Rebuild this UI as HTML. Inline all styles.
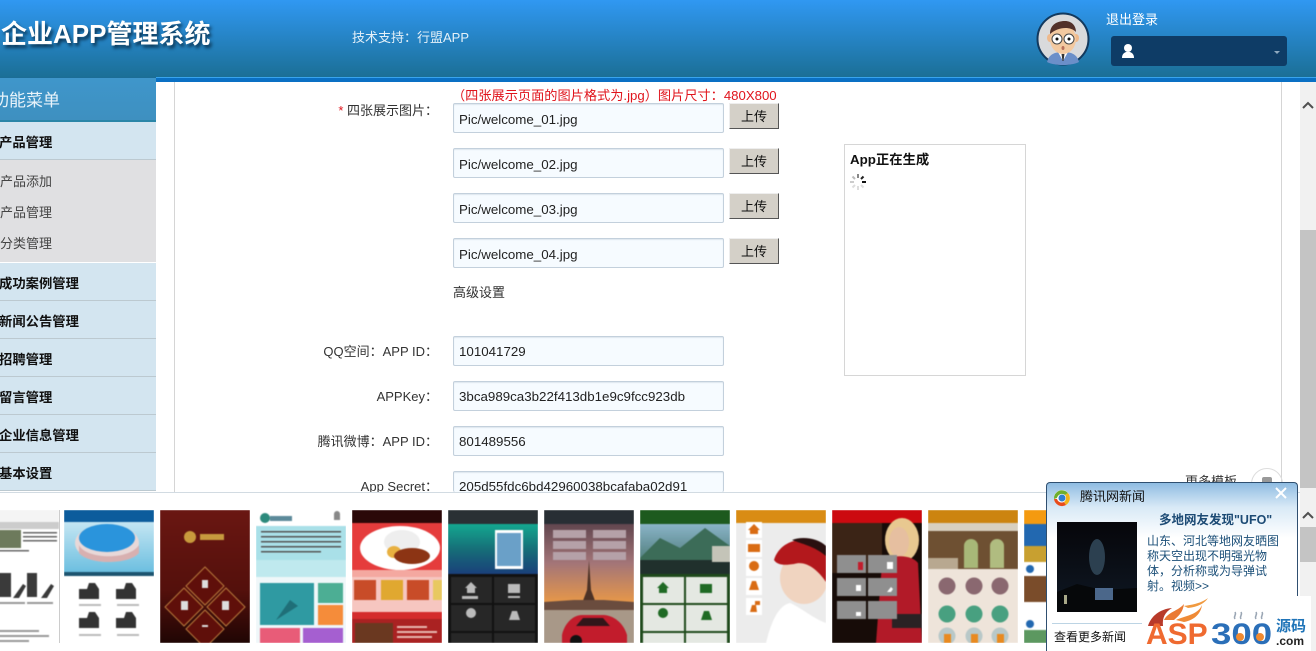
<!DOCTYPE html>
<html lang="zh"><head><meta charset="utf-8"><title>企业APP管理系统</title>
<style>
html,body{margin:0;padding:0;width:1316px;height:651px;overflow:hidden;background:#fff}
body{position:relative;font-family:"Liberation Sans","Noto Sans CJK TC",sans-serif;font-size:13px;color:#222}
.a{position:absolute;white-space:nowrap}
.hdr{left:0;top:0;width:1316px;height:77px;background:linear-gradient(#3098f2,#1b6f96)}
.bar{left:156px;top:77px;width:1160px;height:5px;background:#0a70c4;border-top:1px solid #39a4ee;box-sizing:border-box}
.m{left:0;width:156px;height:38px;background:#d3e5f0;border-bottom:1px solid #bcc9d0;box-sizing:border-box;font-weight:bold;font-size:13.330px;color:#111;line-height:41px;overflow:hidden}
.m span{position:absolute;left:-1px}
.sub{left:0;font-size:13px;color:#444}
.lb{right:878px;text-align:right;color:#333;font-size:13px}
.in{left:453px;width:271px;height:30px;box-sizing:border-box;border:1px solid #c3d0dc;border-radius:2px;background:#f6fbff;padding-left:5px;line-height:29px;font-size:13.330px;color:#222;box-shadow:inset 0 1px 1px #dde6ee}
.p{line-height:31px}
.btn{left:729px;width:50px;height:26px;box-sizing:border-box;background:#d4d0c8;border:1px solid;border-color:#eee #555 #555 #eee;text-align:center;line-height:26px;font-size:13px;color:#111}
.t{top:510px;width:90px;height:133px;overflow:hidden;background:#fff}
.t svg{filter:blur(.5px)}
</style></head><body>

<div class="a hdr"></div>
<div class="a" style="left:1px;top:16px;font-size:26px;line-height:36px;font-weight:bold;color:#fff;text-shadow:2px 3px 3px #0b3554">企业APP管理系统</div>
<div class="a" style="left:352px;top:29px;color:#e4f0f8;font-size:13px;line-height:18px">技术支持：行盟APP</div>

<svg class="a" style="left:1036px;top:12px" width="54" height="54" viewBox="0 0 54 54">
<circle cx="27" cy="27" r="25.500" fill="#d9dadc" stroke="#12395e" stroke-width="2"/>
<path d="M11 50c2-8 8-10 16-10s14 2 16 10c-8 4-24 4-32 0z" fill="#6b8fc9"/>
<path d="M22 40h10l-5 9z" fill="#fff"/><path d="M25.500 42h3l-1 7h-1z" fill="#333"/>
<ellipse cx="14" cy="26" rx="3" ry="4" fill="#eeb98c"/><ellipse cx="40" cy="26" rx="3" ry="4" fill="#eeb98c"/>
<ellipse cx="27" cy="27" rx="13" ry="15" fill="#f3c9a0"/>
<path d="M14 22c0-10 8-13 15-13s11 5 11 11c-6-6-18-5-26 2z" fill="#53312a"/>
<circle cx="21" cy="27" r="5" fill="#fff" stroke="#444"/><circle cx="33" cy="27" r="5" fill="#fff" stroke="#444"/>
<circle cx="21" cy="27" r="1.500" fill="#111"/><circle cx="33" cy="27" r="1.500" fill="#111"/>
<ellipse cx="27" cy="36" rx="1.500" ry="2" fill="#b9705a"/>
</svg>
<div class="a" style="left:1106px;top:10px;color:#fff;font-size:13px;line-height:19px">退出登录</div>
<div class="a" style="left:1111px;top:36px;width:176px;height:30px;background:#0e3c66;border-radius:3px"></div>
<svg class="a" style="left:1121px;top:43px" width="14" height="16" viewBox="0 0 14 16"><circle cx="7" cy="5" r="4" fill="#fff"/><path d="M1 15c0-4 2-5 4-6h4c2 1 4 2 4 6z" fill="#fff"/></svg>
<div class="a" style="left:1274px;top:51px;width:0;height:0;border:3px solid transparent;border-top:3px solid #8fa9bf"></div>

<div class="a bar"></div>

<div class="a" style="left:0;top:77px;width:156px;height:45px;background:linear-gradient(#3f96cb,#3e90c0);border-bottom:2px solid #2a86a8;box-sizing:border-box;border-top:1px solid #1c6d96"></div>
<div class="a" style="left:-8px;top:88px;color:#e8f3fa;font-size:17px;line-height:25px">功能菜单</div>
<div class="a m" style="top:122px"><span>产品管理</span></div>
<div class="a" style="left:0;top:160px;width:156px;height:102px;background:#e0e0e2"></div>
<div class="a sub" style="top:173px;line-height:18px">产品添加</div>
<div class="a sub" style="top:204px;line-height:18px">产品管理</div>
<div class="a sub" style="top:235px;line-height:18px">分类管理</div>
<div class="a m" style="top:263px"><span>成功案例管理</span></div>
<div class="a m" style="top:301px"><span>新闻公告管理</span></div>
<div class="a m" style="top:339px"><span>招聘管理</span></div>
<div class="a m" style="top:377px"><span>留言管理</span></div>
<div class="a m" style="top:415px"><span>企业信息管理</span></div>
<div class="a m" style="top:453px"><span>基本设置</span></div>

<div class="a" style="left:174px;top:82px;width:1px;height:410px;background:#d5d5d5"></div>
<div class="a" style="left:1281px;top:82px;width:1px;height:410px;background:#d5d5d5"></div>
<div class="a" style="left:1300px;top:82px;width:16px;height:410px;background:#f1f1f1"></div>
<div class="a" style="left:1300px;top:230px;width:16px;height:258px;background:#c4c4c4"></div>
<svg class="a" style="left:1302px;top:101px" width="12" height="9" viewBox="0 0 12 9"><path d="M1 7l5-5 5 5" fill="none" stroke="#505050" stroke-width="2"/></svg>

<div class="a" style="left:452px;top:87px;color:#e0141c;font-size:13.200px;line-height:17px">（四张展示页面的图片格式为.jpg）图片尺寸：480X800</div>
<div class="a lb" style="top:102px;line-height:18px"><span style="color:#e0141c">*</span> 四张展示图片：</div>

<div class="a in p" style="top:103px">Pic/welcome_01.jpg</div>
<div class="a in p" style="top:148px">Pic/welcome_02.jpg</div>
<div class="a in p" style="top:193px">Pic/welcome_03.jpg</div>
<div class="a in p" style="top:238px">Pic/welcome_04.jpg</div>
<div class="a btn" style="top:103px">上传</div>
<div class="a btn" style="top:148px">上传</div>
<div class="a btn" style="top:193px">上传</div>
<div class="a btn" style="top:238px">上传</div>
<div class="a" style="left:453px;top:284px;font-size:13px;line-height:18px;color:#333">高级设置</div>

<div class="a" style="left:844px;top:144px;width:182px;height:232px;box-sizing:border-box;border:1px solid #d6d6d6"></div>
<div class="a" style="left:850px;top:151px;font-weight:bold;font-size:13.330px;line-height:18px;color:#111">App正在生成</div>
<svg class="a" style="left:849px;top:173px" width="18" height="18" viewBox="0 0 18 18" fill="none" stroke-width="2">
<path d="M9 1v4" stroke="#888"/><path d="M3.500 3.500l2.500 2.500" stroke="#bbb"/><path d="M1 9h4" stroke="#ccc"/><path d="M3.500 14.500l2.500-2.500" stroke="#ddd"/><path d="M9 17v-4" stroke="#ddd"/><path d="M14.500 14.500l-2.500-2.500" stroke="#ddd"/><path d="M17 9h-4" stroke="#111"/><path d="M14.500 3.500l-2.500 2.500" stroke="#222"/>
</svg>

<div class="a lb" style="top:343px;line-height:18px">QQ空间：APP ID：</div>
<div class="a in" style="top:336px">101041729</div>
<div class="a lb" style="top:388px;line-height:18px">APPKey：</div>
<div class="a in" style="top:381px">3bca989ca3b22f413db1e9c9fcc923db</div>
<div class="a lb" style="top:433px;line-height:18px">腾讯微博：APP ID：</div>
<div class="a in" style="top:426px">801489556</div>
<div class="a lb" style="top:478px;line-height:18px">App Secret：</div>
<div class="a in" style="top:471px;height:21px;border-bottom:0;overflow:hidden">205d55fdc6bd42960038bcafaba02d91</div>
<div class="a" style="left:1185px;top:473px;font-size:13px;line-height:18px;color:#333;height:19px;overflow:hidden">更多模板</div>
<div class="a" style="left:1251px;top:468px;width:32px;height:24px;overflow:hidden"><div style="width:32px;height:32px;border:1px solid #ddd;border-radius:50%;box-sizing:border-box"></div><div style="position:absolute;left:11px;top:9px;width:10px;height:9px;background:#999;border-radius:2px"></div></div>

<div class="a" style="left:0;top:492px;width:1316px;height:159px;background:#fff;border-top:1px solid #d2dbe2;box-sizing:border-box"></div>

<!-- thumb 1 -->
<div class="a t" style="left:-31px;border:0">
<svg width="90" height="133"><rect width="90" height="133" fill="#fff"/><rect width="90" height="12" fill="#f4f4f4"/><rect y="12" width="90" height="7" fill="#ccc"/><rect x="30" y="20" width="22" height="18" fill="#6d7a5c"/><g fill="#666"><rect x="54" y="22" width="34" height="1.500"/><rect x="54" y="26" width="34" height="1.500"/><rect x="54" y="30" width="34" height="1.500"/><rect x="30" y="40" width="30" height="1.500"/></g><g fill="#3a3a3a"><path d="M30 63h12v24H30z"/><path d="M58 63h10v24H58z"/><path d="M44 88l10-14 3 2-7 12z"/><path d="M72 88l10-14 3 2-7 12z"/></g><g fill="#999"><rect x="30" y="92" width="26" height="2"/><rect x="58" y="92" width="26" height="2"/><rect x="30" y="120" width="40" height="2"/><rect x="30" y="125" width="50" height="2"/><rect x="30" y="130" width="30" height="2"/></g></svg></div>
<div class="a" style="left:59px;top:510px;width:1px;height:133px;background:#ccc"></div>

<!-- thumb 2 -->
<div class="a t" style="left:64px"><svg width="90" height="133"><defs><linearGradient id="g2" x1="0" y1="0" x2="0" y2="1"><stop offset="0" stop-color="#c5e6f3"/><stop offset="1" stop-color="#6cbfe0"/></linearGradient></defs><rect width="90" height="12" fill="#0c5c9c"/><rect y="12" width="90" height="50" fill="url(#g2)"/><ellipse cx="43" cy="33" rx="32" ry="19" fill="#e8d8d8"/><ellipse cx="43" cy="28" rx="28" ry="14" fill="#2a94dc"/><path d="M15 35c6 14 50 16 60 0v8c-10 12-50 12-60 0z" fill="#d8b0b0"/><rect y="62" width="90" height="4" fill="#1d5570"/><g fill="#333"><path d="M15 79h8l2-6h6l4 6v10H15z"/><path d="M52 79h8l2-6h6l4 6v10H52z"/><path d="M15 108h8l2-6h6l4 6v10H15z"/><path d="M52 108h8l2-6h6l4 6v10H52z"/></g><g fill="#bbb"><rect x="15" y="94" width="22" height="2"/><rect x="53" y="94" width="22" height="2"/><rect x="15" y="124" width="22" height="2"/><rect x="53" y="124" width="22" height="2"/></g></svg></div>

<!-- thumb 3 -->
<div class="a t" style="left:160px"><svg width="90" height="133"><defs><linearGradient id="g3" x1="0" y1="0" x2="0" y2="1"><stop offset="0" stop-color="#6a1712"/><stop offset=".6" stop-color="#54100c"/><stop offset="1" stop-color="#200604"/></linearGradient></defs><rect width="90" height="133" fill="url(#g3)"/><circle cx="30" cy="27" r="6" fill="#c89a3c"/><rect x="40" y="24" width="24" height="6" fill="#c79a3e"/><g fill="#5f0f0a" stroke="#b8793c"><path d="M45 57l19 19-19 19-19-19z"/><path d="M24 78l19 19-19 19L5 97z"/><path d="M66 78l19 19-19 19-19-19z"/><path d="M45 100l19 19-19 19-19-19z"/></g><g fill="#ddd"><path d="M42 70h6v8h-6z"/><rect x="21" y="91" width="7" height="9"/><rect x="62" y="91" width="7" height="9"/><rect x="42" y="115" width="6" height="2"/></g></svg></div>

<!-- thumb 4 -->
<div class="a t" style="left:256px"><svg width="90" height="133"><rect width="90" height="133" fill="#eff7f9"/><rect width="90" height="16" fill="#fff"/><circle cx="9" cy="8" r="5" fill="#2c8a7c"/><rect x="14" y="6" width="22" height="5" fill="#5c8a9a"/><path d="M78 4a3 3 0 0 1 6 0v6h-6z" fill="#888"/><rect y="16" width="90" height="51" fill="#a9e0e8"/><g fill="#555"><rect x="5" y="21" width="80" height="1.500"/><rect x="5" y="26" width="80" height="1.500"/><rect x="5" y="31" width="80" height="1.500"/><rect x="5" y="36" width="80" height="1.500"/><rect x="5" y="41" width="60" height="1.500"/></g><path d="M0 67V50h90v17z" fill="#bfe9ee"/><rect x="4" y="73" width="54" height="42" fill="#2f9aa2"/><path d="M20 110l14-20 8 6z" fill="#1f6f78"/><rect x="62" y="73" width="25" height="20" fill="#4cae94"/><rect x="62" y="95" width="25" height="20" fill="#f58c3a"/><rect x="4" y="118" width="40" height="15" fill="#e85c78"/><rect x="47" y="118" width="40" height="15" fill="#a55fd0"/></svg></div>

<!-- thumb 5 -->
<div class="a t" style="left:352px"><svg width="90" height="133"><rect width="90" height="133" fill="#e53c3c"/><rect width="90" height="13" fill="#2b0808"/><ellipse cx="48" cy="38" rx="40" ry="22" fill="#fff"/><ellipse cx="50" cy="32" rx="18" ry="12" fill="#eee"/><ellipse cx="42" cy="42" rx="7" ry="6" fill="#e8b040"/><ellipse cx="60" cy="46" rx="18" ry="8" fill="#8c3414"/><rect y="60" width="90" height="7" fill="#f4a8a0"/><rect y="67" width="90" height="35" fill="#f6c6c0"/><rect x="2" y="70" width="22" height="20" fill="#c84c28"/><rect x="29" y="70" width="22" height="20" fill="#e0a830"/><rect x="55" y="70" width="22" height="20" fill="#c84c28"/><rect x="81" y="70" width="9" height="20" fill="#e8c860"/><rect y="102" width="90" height="7" fill="#d42c2c"/><rect x="0" y="109" width="90" height="24" fill="#aa2222"/><rect x="3" y="113" width="38" height="20" fill="#6a3820"/><g fill="#e8b8b0"><rect x="45" y="116" width="30" height="2"/><rect x="45" y="121" width="40" height="2"/><rect x="45" y="126" width="35" height="2"/></g></svg></div>

<!-- thumb 6 -->
<div class="a t" style="left:448px"><svg width="90" height="133"><defs><linearGradient id="g6" x1="0" y1="0" x2="0" y2="1"><stop offset="0" stop-color="#14a890"/><stop offset=".5" stop-color="#166f78"/><stop offset="1" stop-color="#1a3f7a"/></linearGradient></defs><rect width="90" height="133" fill="#111"/><rect width="90" height="14" fill="#2a3034"/><rect y="14" width="90" height="50" fill="url(#g6)"/><rect x="47" y="20" width="28" height="39" fill="#fff"/><rect x="49" y="23" width="24" height="33" fill="#6aa0c8"/><g fill="#272727"><rect x="3" y="67" width="41" height="26"/><rect x="46" y="67" width="41" height="26"/><rect x="3" y="95" width="41" height="26"/><rect x="46" y="95" width="41" height="26"/><rect x="3" y="123" width="41" height="10"/><rect x="46" y="123" width="41" height="10"/></g><g fill="#bbb"><path d="M23 72l6 6h-2v5h-8v-5h-2z"/><rect x="60" y="74" width="12" height="9"/><circle cx="23" cy="103" r="5"/><path d="M61 110l3-9h5l3 9z"/><rect x="14" y="86" width="16" height="3"/><rect x="60" y="86" width="12" height="2"/></g></svg></div>

<!-- thumb 7 -->
<div class="a t" style="left:544px"><svg width="90" height="133"><defs><linearGradient id="g7" x1="0" y1="0" x2="0" y2="1"><stop offset="0" stop-color="#4a3540"/><stop offset=".4" stop-color="#a37578"/><stop offset=".7" stop-color="#e89848"/><stop offset="1" stop-color="#b0947c"/></linearGradient></defs><rect width="90" height="133" fill="url(#g7)"/><rect width="90" height="14" fill="#282e34"/><g fill="#b5a1a8"><rect x="9" y="20" width="33" height="8"/><rect x="49" y="20" width="33" height="8"/><rect x="9" y="31" width="33" height="8"/><rect x="49" y="31" width="33" height="8"/><rect x="9" y="42" width="33" height="8"/><rect x="49" y="42" width="33" height="8"/></g><path d="M45 50l2 30 6 16H37l6-16z" fill="#4c3226"/><path d="M0 92l30-2 30 0 30 2v8H0z" fill="#6a4c3e"/><rect y="100" width="90" height="33" fill="#a89888"/><path d="M18 125c2-10 10-20 20-20h22c12 1 20 10 23 20v8H18z" fill="#c21c2c"/><path d="M32 116l7-8h20l7 8z" fill="#31161a"/><circle cx="32" cy="131" r="6" fill="#111"/></svg></div>

<!-- thumb 8 -->
<div class="a t" style="left:640px"><svg width="90" height="133"><defs><linearGradient id="g8" x1="0" y1="0" x2="0" y2="1"><stop offset="0" stop-color="#8ab4c8"/><stop offset="1" stop-color="#3b6a60"/></linearGradient></defs><rect width="90" height="133" fill="#1f4a1c"/><rect width="90" height="14" fill="#1d5a1e"/><rect y="14" width="90" height="50" fill="url(#g8)"/><path d="M0 48l20-20 20 10 25-20 25 18v14H0z" fill="#3c6c58"/><rect y="50" width="90" height="14" fill="#20302c"/><rect x="72" y="36" width="18" height="16" fill="#c4c4b8"/><g fill="#e4e8e2"><rect x="3" y="67" width="41" height="26"/><rect x="46" y="67" width="41" height="26"/><rect x="3" y="95" width="41" height="26"/><rect x="46" y="95" width="41" height="26"/><rect x="3" y="123" width="41" height="10"/><rect x="46" y="123" width="41" height="10"/></g><g fill="#1f6a24"><path d="M23 72l6 6h-2v5h-8v-5h-2z"/><rect x="60" y="74" width="12" height="9"/><circle cx="23" cy="103" r="5"/><path d="M61 110l3-9h5l3 9z"/></g></svg></div>

<!-- thumb 9 -->
<div class="a t" style="left:736px"><svg width="90" height="133"><rect width="90" height="133" fill="#ececec"/><rect width="90" height="13" fill="#d98c14"/><path d="M30 133c6-25 14-38 24-40 10 4 24 16 36 20v20z" fill="#fff"/><ellipse cx="68" cy="68" rx="24" ry="26" fill="#f0d4c0"/><path d="M38 50c6-20 30-26 52-14v36c-8-12-20-22-32-18-8 1-16 2-20-4z" fill="#b3181c"/><path d="M56 30c10-4 26-2 34 6v10c-12-10-24-12-34-16z" fill="#2a1010"/><g fill="#fff"><rect x="10" y="12" width="16" height="16"/><rect x="10" y="30" width="16" height="17"/><rect x="10" y="49" width="16" height="17"/><rect x="10" y="68" width="16" height="17"/><rect x="10" y="88" width="16" height="17"/></g><g fill="#d96c14"><path d="M18 14l6 6h-2v4h-8v-4h-2z"/><rect x="12" y="34" width="12" height="8"/><circle cx="18" cy="56" r="5"/><path d="M13 80l3-9h4l3 9z"/><path d="M14 102l2-7h3v-4h5v4h-4l1 7z"/></g></svg></div>

<!-- thumb 10 -->
<div class="a t" style="left:832px"><svg width="90" height="133"><rect width="90" height="133" fill="#170c08"/><path d="M0 13h50v50H0z" fill="#3b2416"/><rect width="90" height="13" fill="#cc0a10"/><ellipse cx="70" cy="30" rx="17" ry="22" fill="#e8c890"/><ellipse cx="67" cy="32" rx="10" ry="15" fill="#e6bfa0"/><path d="M44 133l6-80c10-10 30-8 36 0l4 80z" fill="#b21a28"/><rect x="60" y="104" width="30" height="14" fill="#2a2224"/><g fill="#8f8f8f"><rect x="5" y="45" width="29" height="18"/><rect x="36" y="45" width="29" height="18"/><rect x="5" y="68" width="29" height="18"/><rect x="36" y="68" width="29" height="18"/><rect x="5" y="91" width="29" height="18"/><rect x="36" y="91" width="29" height="18"/></g><rect x="26" y="52" width="5" height="8" fill="#c21c2c"/><g fill="#fff"><path d="M55 52h6v7h-6z"/><rect x="24" y="75" width="5" height="6"/><path d="M55 82l4-5 2 2-2 3z"/><rect x="24" y="102" width="5" height="4"/></g></svg></div>

<!-- thumb 11 -->
<div class="a t" style="left:928px"><svg width="90" height="133"><rect width="90" height="133" fill="#eee4da"/><rect width="90" height="13" fill="#cc8410"/><rect y="13" width="90" height="46" fill="#6e5032"/><path d="M0 13h90v8H0z" fill="#d8d0c0"/><path d="M36 58V36a7 7 0 0 1 14 0v22z" fill="#a8b878"/><path d="M62 58V36a7 7 0 0 1 14 0v22z" fill="#b0bc80"/><rect x="0" y="48" width="30" height="11" fill="#b8a890"/><g fill="#8a6870"><circle cx="19" cy="76" r="8.500"/><circle cx="46" cy="76" r="8.500"/><circle cx="72" cy="76" r="8.500"/></g><g fill="#48a080"><circle cx="19" cy="104" r="8.500"/><circle cx="46" cy="104" r="8.500"/><circle cx="72" cy="104" r="8.500"/></g><g fill="#b8c8c8"><circle cx="19" cy="126" r="8.500"/><circle cx="46" cy="126" r="8.500"/><circle cx="72" cy="126" r="8.500"/></g><g fill="#e88a20"><rect x="16" y="124" width="7" height="9"/><rect x="43" y="124" width="7" height="9"/><rect x="69" y="124" width="7" height="9"/></g></svg></div>

<!-- thumb 12 -->
<div class="a t" style="left:1024px;width:24px"><svg width="24" height="133"><rect width="24" height="133" fill="#fff"/><rect width="24" height="14" fill="#f49a10"/><rect y="14" width="24" height="38" fill="#2268b0"/><rect y="36" width="24" height="16" fill="#c8a030"/><circle cx="6" cy="59" r="4" fill="#2268b0"/><rect y="66" width="24" height="26" fill="#7a4c2a"/><circle cx="6" cy="114" r="4" fill="#2268b0"/><rect y="120" width="24" height="13" fill="#5c9860"/></svg></div>

<!-- lower scrollbar -->
<div class="a" style="left:1300px;top:492px;width:16px;height:159px;background:#f1f1f1"></div>
<div class="a" style="left:1300px;top:527px;width:16px;height:35px;background:#c4c4c4"></div>
<svg class="a" style="left:1302px;top:511px" width="12" height="9" viewBox="0 0 12 9"><path d="M1 7l5-5 5 5" fill="none" stroke="#505050" stroke-width="2"/></svg>

<!-- popup -->
<div class="a" style="left:1046px;top:482px;width:252px;height:169px;box-sizing:border-box;border:1px solid #2f4f70;border-bottom:0;border-radius:4px 4px 0 0;background:linear-gradient(#8fbce2 0,#d8e9f6 24px,#fff 55px)"></div>
<svg class="a" style="left:1052px;top:488px" width="20" height="20" viewBox="0 0 20 20"><circle cx="10" cy="10" r="8" fill="#fff"/><path d="M2 11a8 8 0 0 1 14-6l-3 2a5 5 0 0 0-8 3z" fill="#6fae2c"/><path d="M16 5a8 8 0 0 1-2 12l-2-3a5 5 0 0 0 1-7z" fill="#f2b21a"/><path d="M14 17a8 8 0 0 1-12-6h3a5 5 0 0 0 7 3z" fill="#e84c1c"/><circle cx="10" cy="10" r="3.500" fill="#2f7fd0"/></svg>
<div class="a" style="left:1080px;top:488px;font-size:13px;line-height:18px;color:#111">腾讯网新闻</div>
<svg class="a" style="left:1275px;top:487px" width="12" height="12" viewBox="0 0 12 12"><path d="M1 1l10 10M11 1L1 11" stroke="#fff" stroke-width="2"/></svg>
<div class="a" style="left:1159px;top:512px;font-size:12.500px;line-height:17px;font-weight:bold;color:#1c4a74">多地网友发现"UFO"</div>
<svg class="a" style="left:1057px;top:522px" width="80" height="90"><defs><linearGradient id="u" x1="0" y1="0" x2="0" y2="1"><stop offset="0" stop-color="#06060a"/><stop offset="1" stop-color="#0f1824"/></linearGradient></defs><rect width="80" height="90" fill="url(#u)"/><ellipse cx="40" cy="35" rx="8" ry="18" fill="#2c4050"/><path d="M0 90V70l20-8 25 6 35-2v24z" fill="#06080a"/><rect x="38" y="66" width="18" height="12" fill="#6a90c0" opacity=".7"/><rect x="7" y="73" width="3" height="9" fill="#a8a888"/></svg>
<div class="a" style="left:1147px;top:534px;width:145px;white-space:normal;font-size:12px;line-height:15px;color:#1b4f78">山东、河北等地网友晒图<br>称天空出现不明强光物<br>体，分析称或为导弹试<br>射。视频&gt;&gt;</div>
<div class="a" style="left:1052px;top:623px;width:240px;height:1px;background:#bcd4e4"></div>
<div class="a" style="left:1054px;top:628px;font-size:12px;line-height:18px;color:#111">查看更多新闻</div>

<!-- watermark -->
<div class="a" style="left:1142px;top:596px;width:169px;height:55px;background:#fff"></div>
<svg class="a" style="left:1144px;top:596px" width="130" height="55" viewBox="0 0 130 55">
<path d="M4 30c3-10 12-17 24-18-7 4-10 10-9 18z" fill="#b83a2a"/>
<path d="M20 24c4-8 14-9 20-16-1 7-4 11-10 16z" fill="#ea7a34"/>
<path d="M32 24c8-4 22-5 26-15-1 8-7 15-18 17z" fill="#ef8a36"/>
<path d="M40 10c6-1 16-2 24-8-3 5-10 9-20 10z" fill="#f09a40"/>
<g fill="none" stroke="#9aa6b4" stroke-width="1.500"><path d="M91 23c-2-3 2-4 0-7"/><path d="M97 23c-2-3 2-4 0-7"/><path d="M112 23c-2-3 2-4 0-7"/><path d="M118 23c-2-3 2-4 0-7"/></g>
</svg>
<div class="a" style="left:1146px;top:619px;font-size:30px;line-height:32px;font-weight:bold;color:#ef6a30">ASP<span style="display:inline-block;color:#2b6fb8;margin-left:3px;transform:scaleX(1.22);transform-origin:0 50%">300</span></div>
<svg class="a" style="left:1225px;top:625px" width="50" height="24" viewBox="0 0 50 24"><circle cx="15" cy="12" r="4" fill="#f08a30"/><circle cx="35" cy="12" r="4" fill="#f08a30"/></svg>
<div class="a" style="left:1276px;top:617px;font-size:15px;line-height:19px;font-weight:bold;color:#1f74b8">源码</div>
<div class="a" style="left:1276px;top:634px;font-size:12px;line-height:15px;font-weight:bold;color:#222">.com</div>
</body></html>
